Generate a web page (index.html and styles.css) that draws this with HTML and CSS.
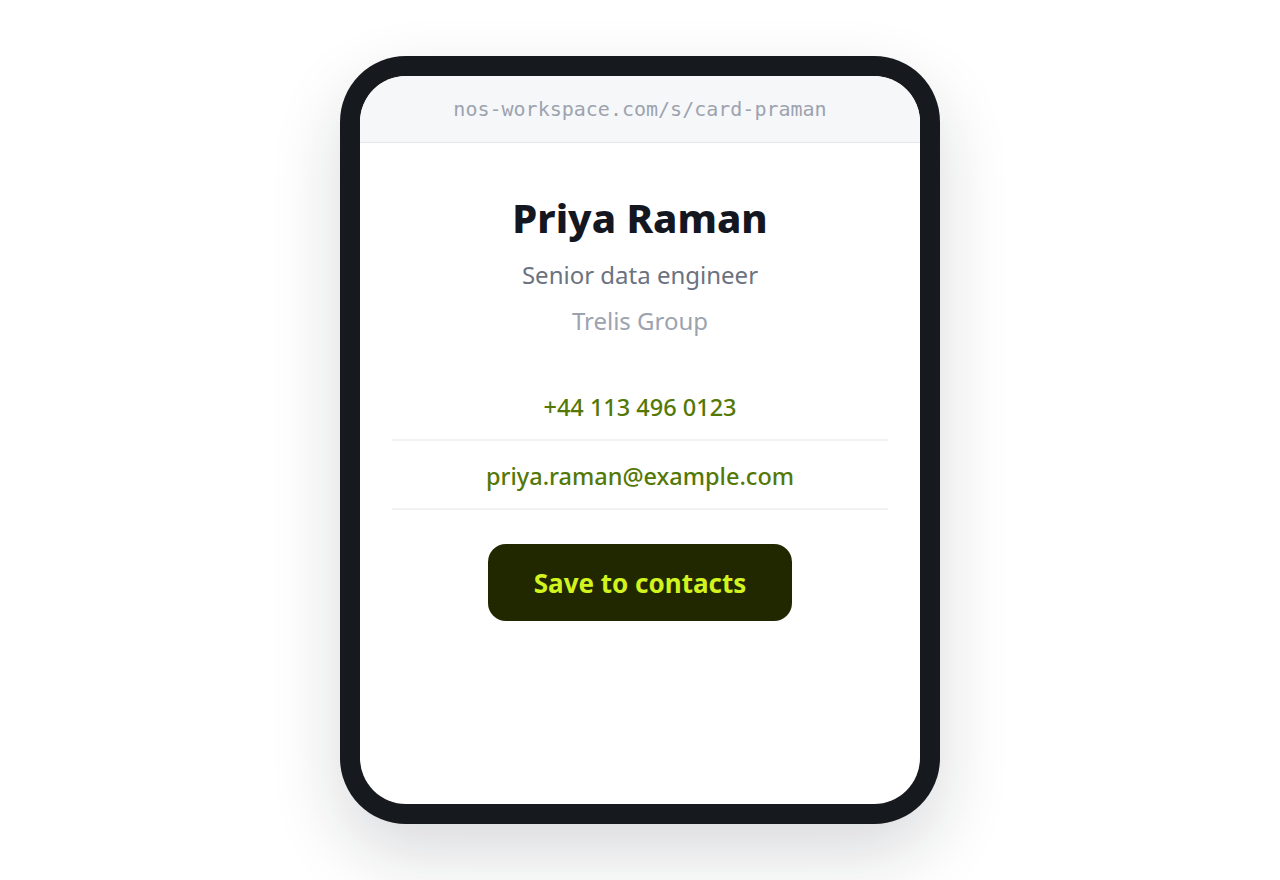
FILE: index.html
```html
<!DOCTYPE html>
<html lang="en">
<head>
<meta charset="utf-8">
<title>Priya Raman</title>
<link rel="stylesheet" href="styles.css">
</head>
<body>
<div class="stage">
  <div class="phone">
    <div class="screen">
      <div class="urlbar">nos-workspace.com/s/card-praman</div>
      <div class="card">
        <h1 class="name">Priya Raman</h1>
        <div class="role">Senior data engineer</div>
        <div class="company">Trelis Group</div>
        <div class="contacts">
          <a class="contact" href="#">+44 113 496 0123</a>
          <a class="contact" href="#">priya.raman@example.com</a>
        </div>
        <button class="save">Save to contacts</button>
      </div>
    </div>
  </div>
</div>
</body>
</html>
```
FILE: styles.css
```css
html, body {
  margin: 0;
  padding: 0;
  background: #ffffff;
}
body {
  font-family: "Segoe UI", "Noto Sans", "Open Sans", sans-serif;
}
.stage {
  height: 880px;
  display: flex;
  justify-content: center;
  padding-top: 56px;
  box-sizing: border-box;
}
.phone {
  width: 600px;
  height: 768px;
  box-sizing: border-box;
  background: #16191e;
  border-radius: 66px;
  padding: 20px;
  box-shadow: 0 30px 70px rgba(17, 24, 39, 0.16);
}
.screen {
  height: 100%;
  background: #ffffff;
  border-radius: 46px;
  overflow: hidden;
  display: flex;
  flex-direction: column;
}
.urlbar {
  height: 67px;
  box-sizing: border-box;
  background: #f6f7f9;
  border-bottom: 1px solid #e5e7eb;
  display: flex;
  align-items: center;
  justify-content: center;
  font-family: "DejaVu Sans Mono", "Liberation Mono", monospace;
  font-size: 20px;
  color: #9ca3af;
}
.card {
  display: flex;
  flex-direction: column;
  align-items: center;
  padding: 51px 32px 0;
}
.name {
  margin: 0;
  font-size: 40px;
  line-height: 48px;
  font-weight: 800;
  color: #14171f;
}
.role {
  margin-top: 18px;
  font-size: 24px;
  line-height: 30px;
  color: #6b7280;
}
.company {
  margin-top: 16px;
  font-size: 24px;
  line-height: 30px;
  color: #9ca3af;
}
.contacts {
  align-self: stretch;
  margin-top: 56px;
  display: flex;
  flex-direction: column;
}
.contact {
  display: block;
  text-align: center;
  padding: 20px 0 17px;
  font-size: 23.5px;
  line-height: 30px;
  font-weight: 500;
  color: #537806;
  text-decoration: none;
  border-bottom: 2px solid #f1f2f4;
}
.contact:first-child {
  padding-top: 0;
}
.save {
  margin-top: 34px;
  width: 304px;
  height: 77px;
  border: none;
  border-radius: 18px;
  background: #212800;
  color: #d2f31e;
  font-family: inherit;
  font-size: 26px;
  font-weight: 700;
  cursor: pointer;
}
```
